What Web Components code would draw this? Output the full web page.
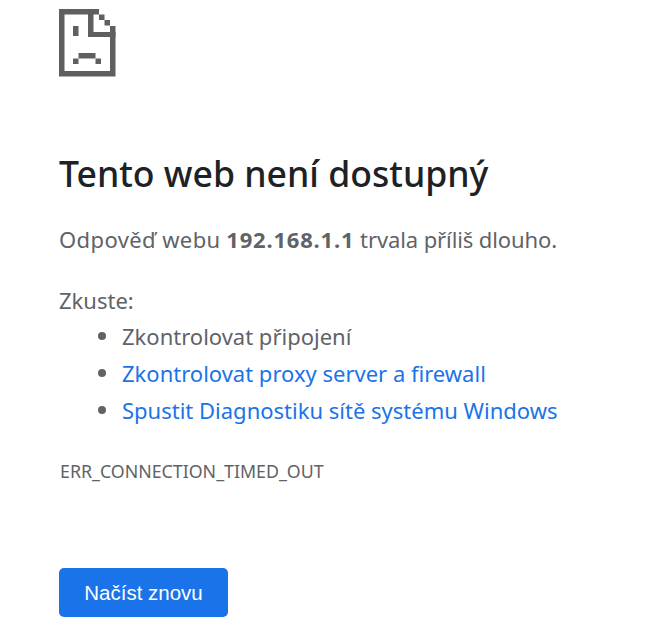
<!DOCTYPE html>
<html lang="cs">
<head>
<meta charset="utf-8">
<title>192.168.1.1</title>
<style>
  html, body { margin: 0; background: #fff; }
</style>
</head>
<body>
<error-page>
  <sad-tab-icon></sad-tab-icon>
  <span slot="title">Tento web není dostupný</span>
  <span slot="summary"><span style="letter-spacing:.4px">Odpověď webu</span> <b style="letter-spacing:.8px">192.168.1.1</b> <span style="letter-spacing:-.1px">trvala příliš dlouho.</span></span>
  <span slot="lead">Zkuste:</span>
  <suggestion-item>Zkontrolovat připojení</suggestion-item>
  <suggestion-item link>Zkontrolovat proxy server a firewall</suggestion-item>
  <suggestion-item link>Spustit Diagnostiku sítě systému Windows</suggestion-item>
  <span slot="code">ERR_CONNECTION_TIMED_OUT</span>
  <reload-button slot="action">Načíst znovu</reload-button>
</error-page>
<script>
class SadTabIcon extends HTMLElement {
  constructor() {
    super();
    this.attachShadow({ mode: 'open' });
  }

  connectedCallback() {
    this.shadowRoot.innerHTML = `
      <style>
        :host { display: block; width: 57px; height: 68px; }
        svg { display: block; }
      </style>
      <svg width="57" height="68" viewBox="0 0 57 68" fill="#5f5f5f">
        <path d="M0 0H40V5.5H5.5V62H51V17H56.5V67.5H0Z"/>
        <path d="M29 0H34.5V23H56.5V28H29Z"/>
        <rect x="40" y="5.5" width="5.5" height="5.5"/>
        <rect x="45.5" y="11" width="5.5" height="5.5"/>
        <rect x="14" y="17" width="5.5" height="10"/>
        <rect x="19.5" y="44" width="17" height="5.5"/>
        <rect x="14" y="49.5" width="5.5" height="5.5"/>
        <rect x="36.5" y="49.5" width="5.5" height="5.5"/>
      </svg>
    `;
  }
}

class SuggestionItem extends HTMLElement {
  constructor() {
    super();
    this.attachShadow({ mode: 'open' });
  }

  connectedCallback() {
    const color = this.hasAttribute('link') ? '#1a73e8' : 'inherit';
    this.shadowRoot.innerHTML = `
      <style>
        :host { display: flex; align-items: center; height: 37px; }
        .dot { width: 8px; height: 8px; border-radius: 50%; background: #5f6368; margin: 1px 16px 0 39px; }
        .label { color: ${color}; }
      </style>
      <span class="dot"></span>
      <span class="label"><slot></slot></span>
    `;
  }
}

class ReloadButton extends HTMLElement {
  constructor() {
    super();
    this.attachShadow({ mode: 'open' });
  }

  connectedCallback() {
    this.shadowRoot.innerHTML = `
      <style>
        :host { display: inline-block; }
        button {
          width: 169px;
          height: 49px;
          border: 0;
          border-radius: 5px;
          background: #1a73e8;
          color: #fff;
          font: 20.5px "Liberation Sans", Arial, sans-serif;
          padding: 0;
        }
      </style>
      <button type="button"><slot></slot></button>
    `;
  }
}

class ErrorPage extends HTMLElement {
  constructor() {
    super();
    this.attachShadow({ mode: 'open' });
  }

  connectedCallback() {
    this.shadowRoot.innerHTML = `
      <style>
        :host {
          display: block;
          box-sizing: border-box;
          height: 634px;
          padding: 9px 0 0 59px;
          font-family: "Noto Sans", "Open Sans", sans-serif;
          font-size: 22px;
          color: #5f6368;
        }
        .title { margin: 71px 0 0; font-size: 35.6px; font-weight: 500; line-height: 50px; color: #202124; }
        .summary { margin: 28px 0 0; line-height: 27px; }
        .lead { margin: 34px 0 0; line-height: 27px; }
        .list { margin-top: 3px; }
        .code { margin: 31px 0 0 1px; font-size: 17.8px; line-height: 24px; }
        .action { margin-top: 85px; }
      </style>
      <slot></slot>
      <h1 class="title"><slot name="title"></slot></h1>
      <p class="summary"><slot name="summary"></slot></p>
      <p class="lead"><slot name="lead"></slot></p>
      <div class="list"><slot name="items"></slot></div>
      <div class="code"><slot name="code"></slot></div>
      <div class="action"><slot name="action"></slot></div>
    `;
  }
}

customElements.define('sad-tab-icon', SadTabIcon);
customElements.define('suggestion-item', SuggestionItem);
customElements.define('reload-button', ReloadButton);
customElements.define('error-page', ErrorPage);

document.querySelectorAll('suggestion-item').forEach((item) => {
  item.setAttribute('slot', 'items');
});
</script>
</body>
</html>
